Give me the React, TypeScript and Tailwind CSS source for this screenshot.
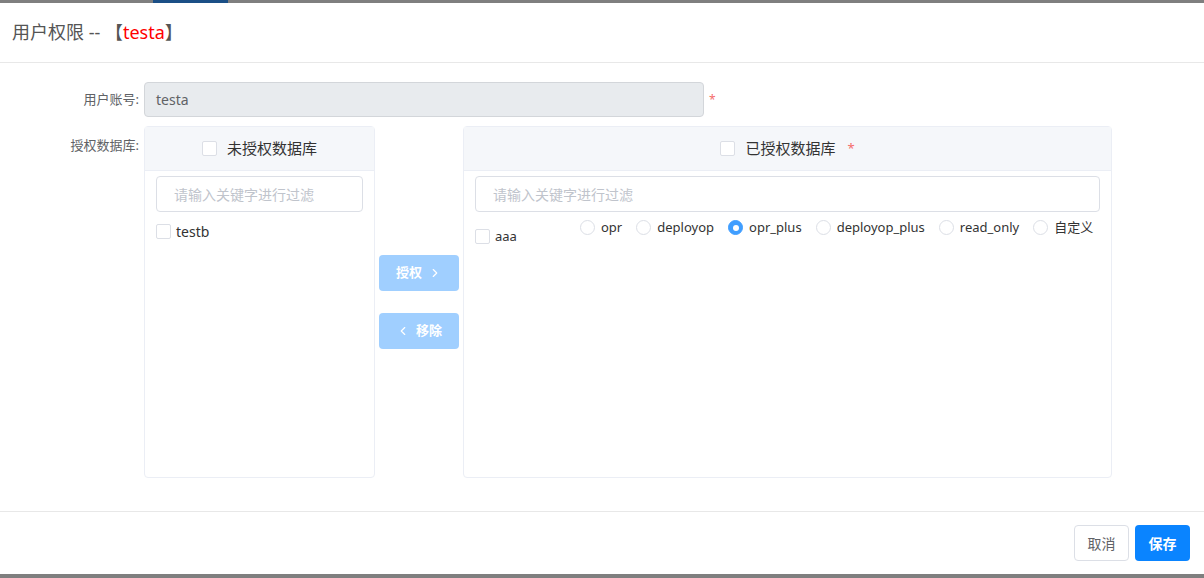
import { ChevronLeft, ChevronRight } from 'lucide-react';

const ROLES = ['opr', 'deployop', 'opr_plus', 'deployop_plus', 'read_only', '自定义'];

function Box() {
  return <span className="inline-block w-[15px] h-[15px] border border-[#dcdfe6] rounded-[2px] bg-white shrink-0" />;
}

function Radio({ on }: { on?: boolean }) {
  return (
    <span
      className={
        'w-[15px] h-[15px] rounded-full border shrink-0 flex items-center justify-center ' +
        (on ? 'border-[#409eff] bg-[#409eff]' : 'border-[#dcdfe6] bg-white')
      }
    >
      {on && <span className="w-[6px] h-[6px] rounded-full bg-white" />}
    </span>
  );
}

function Filter() {
  return (
    <div className="h-[36px] border border-[#dcdfe6] rounded-[4px] flex items-center px-[17px] text-[14px] text-[#c0c4cc]">
      请输入关键字进行过滤
    </div>
  );
}

export default function App() {
  return (
    <div
      className="w-[1204px] h-[578px] bg-[#7f7f7f] flex flex-col overflow-hidden"
      style={{ fontFamily: '"Noto Sans", "Noto Sans CJK SC", sans-serif' }}
    >
      {/* backdrop strip */}
      <div className="h-[3px] flex shrink-0">
        <div className="w-[153px]" />
        <div className="w-[75px] bg-[#1b4f86]" />
      </div>

      <div className="bg-white h-[571px] flex flex-col">
        {/* header */}
        <div className="h-[60px] border-b border-[#e8e8e8] flex items-center px-[12px] text-[18px] text-[#555] font-normal shrink-0">
          用户权限 -- 【<span className="text-[#ff0000]">testa</span>】
        </div>

        {/* body */}
        <div className="flex-1 pt-[19px] text-[13px] text-[#606266]">
          <div className="flex items-center">
            <div className="w-[144px] pr-[5px] text-right">用户账号:</div>
            <div className="w-[560px] h-[35px] bg-[#e8ebee] border border-[#d3d6da] rounded-[4px] flex items-center px-[11px] text-[14px] text-[#606266]">
              testa
            </div>
            <span className="ml-[5px] text-[#f56c6c] text-[12px]">*</span>
          </div>

          <div className="flex mt-[9px]">
            <div className="w-[144px] pr-[5px] text-right pt-[10px]">授权数据库:</div>

            {/* left panel */}
            <div className="w-[231px] h-[352px] border border-[#ebeef5] rounded-[4px] flex flex-col">
              <div className="h-[44px] bg-[#f5f7fa] border-b border-[#ebeef5] flex items-center justify-center gap-[10px] text-[15px] text-[#333]">
                <Box />
                <span>未授权数据库</span>
              </div>
              <div className="px-[11px] pt-[5px]">
                <Filter />
                <div className="flex items-center gap-[5px] mt-[9px] text-[14px] text-[#333]">
                  <Box />
                  <span>testb</span>
                </div>
              </div>
            </div>

            {/* transfer buttons */}
            <div className="w-[88px] px-[4px] flex flex-col pt-[129px] gap-[22px]">
              <div className="h-[36px] bg-[#a0cfff] rounded-[4px] flex items-center justify-center gap-[6px] text-white text-[13px] font-bold">
                授权 <ChevronRight className="w-[14px] h-[14px]" strokeWidth={2} />
              </div>
              <div className="h-[36px] bg-[#a0cfff] rounded-[4px] flex items-center justify-center gap-[6px] text-white text-[13px] font-bold">
                <ChevronLeft className="w-[14px] h-[14px]" strokeWidth={2} /> 移除
              </div>
            </div>

            {/* right panel */}
            <div className="w-[649px] h-[352px] border border-[#ebeef5] rounded-[4px] flex flex-col">
              <div className="h-[44px] bg-[#f5f7fa] border-b border-[#ebeef5] flex items-center justify-center gap-[10px] text-[15px] text-[#333]">
                <Box />
                <span>已授权数据库</span>
                <span className="text-[#f56c6c] text-[13px] ml-[2px]">*</span>
              </div>
              <div className="px-[11px] pt-[5px]">
                <Filter />
                <div className="flex items-start mt-[6px] text-[13px] text-[#333]">
                  <div className="w-[105px] flex items-center gap-[5px] pt-[9px]">
                    <Box />
                    <span className="text-[13px]">aaa</span>
                  </div>
                  <div className="flex items-center gap-[14px]">
                    {ROLES.map((r) => (
                      <div key={r} className="flex items-center gap-[6px]">
                        <Radio on={r === 'opr_plus'} />
                        <span>{r}</span>
                      </div>
                    ))}
                  </div>
                </div>
              </div>
            </div>
          </div>
        </div>

        {/* footer */}
        <div className="h-[63px] border-t border-[#e8e8e8] flex items-start justify-end gap-[6px] pt-[13px] pr-[14px] shrink-0">
          <button className="w-[55px] h-[36px] border border-[#dcdfe6] rounded-[4px] text-[14px] text-[#606266] bg-white">
            取消
          </button>
          <button className="w-[55px] h-[36px] rounded-[4px] text-[14px] text-white bg-[#0a84ff] font-bold">
            保存
          </button>
        </div>
      </div>
    </div>
  );
}
